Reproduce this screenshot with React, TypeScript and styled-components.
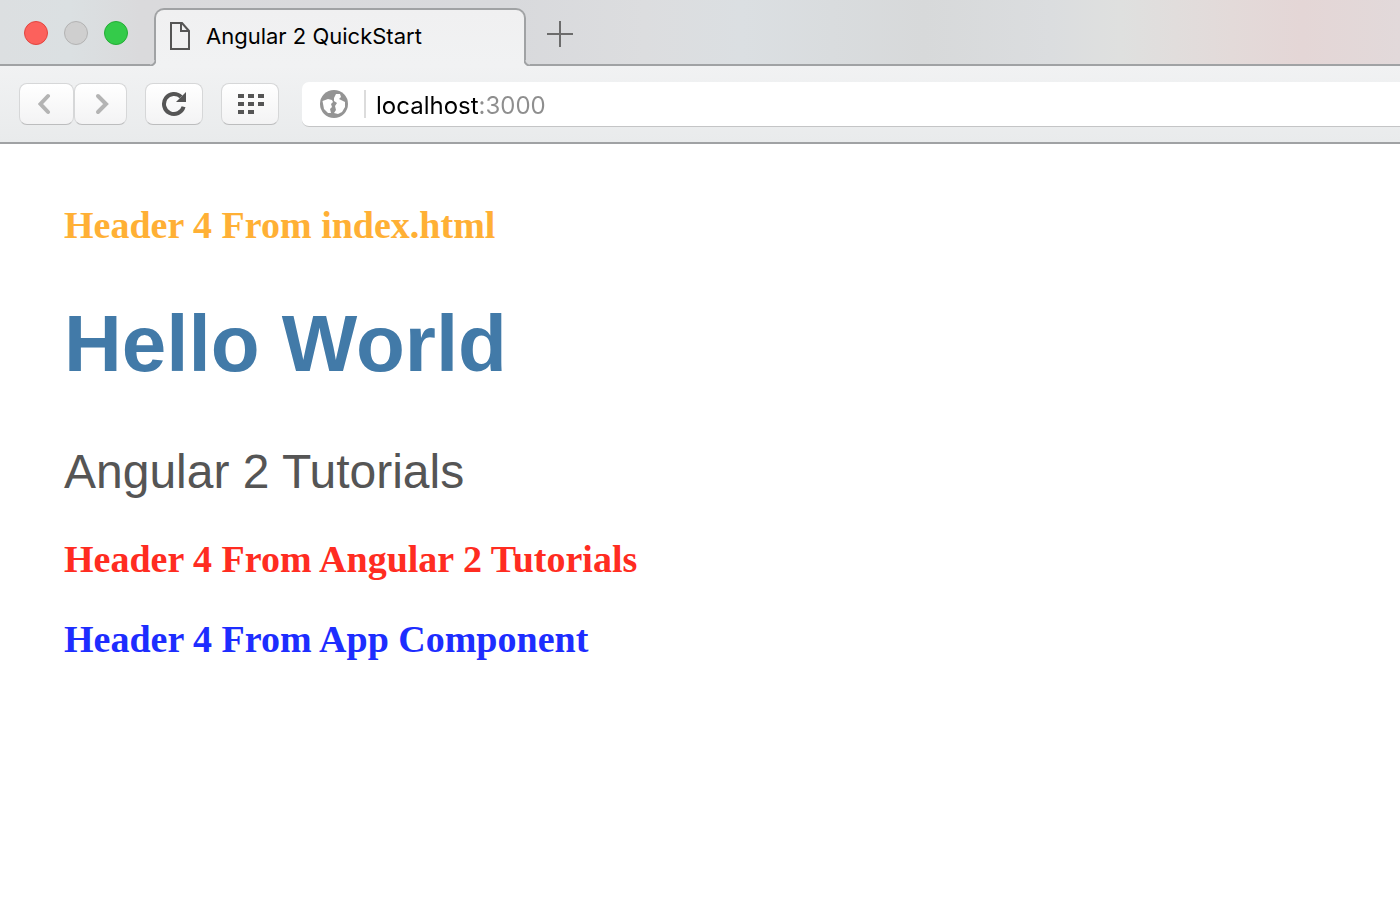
import React from "react";
import styled, { createGlobalStyle } from "styled-components";

const line = "#a0a2a4";
const bar = "#f1f2f3";

const GlobalStyle = createGlobalStyle`
  * { box-sizing: border-box; }
  body { margin: 0; background: #fff; }
  button { font: inherit; padding: 0; cursor: pointer; }
`;

const Window = styled.div`
  min-height: 100vh;
  overflow: hidden;
  background: #fff;
  font-family: Inter, "Liberation Sans", sans-serif;
`;

const TabStrip = styled.header`
  display: flex;
  height: 66px;
  border-bottom: 2px solid ${line};
  background: linear-gradient(90deg, #dcdfe1 0%, #dbe0e2 5%, #dadadc 10%, #d8d9dc 36%, #dcdddf 46%, #dbdfe2 53%, #d7d9da 66%, #dbdddf 75%, #dfe0df 80%, #e3dad9 88%, #e4d6d6 93%, #e2d9da 100%);
`;

const Lights = styled.div`
  display: flex;
  gap: 16px;
  width: 154px;
  padding: 21px 0 0 24px;
`;

const Light = styled.button<{ $fill: string; $edge: string }>`
  width: 24px;
  height: 24px;
  border: 1px solid ${(p) => p.$edge};
  border-radius: 50%;
  background: ${(p) => p.$fill};
`;

const Tab = styled.button`
  position: relative;
  display: flex;
  align-items: center;
  gap: 16px;
  width: 372px;
  height: 58px;
  margin-top: 8px;
  padding: 0 14px 4px;
  border: 2px solid ${line};
  border-bottom: 0;
  border-radius: 10px 10px 0 0;
  background: linear-gradient(#f0f0f1, ${bar});
  color: #000;
  font-size: 22px;
  line-height: 28px;
  white-space: nowrap;

  &::before,
  &::after {
    content: "";
    position: absolute;
    bottom: 0;
    width: 6px;
    height: 6px;
  }
  &::before {
    left: -6px;
    background: radial-gradient(circle at 0 0, #dadadc 4px, ${line} 5px, ${line} 6px, ${bar} 7px);
  }
  &::after {
    right: -6px;
    background: radial-gradient(circle at 100% 0, #d9dadc 4px, ${line} 5px, ${line} 6px, ${bar} 7px);
  }
`;

const NewTab = styled.button`
  display: flex;
  align-items: center;
  justify-content: center;
  width: 68px;
  height: 64px;
  padding-top: 4px;
  border: 0;
  background: transparent;
`;

const Toolbar = styled.nav`
  display: flex;
  align-items: flex-start;
  height: 78px;
  padding: 16px 0 0 19px;
  border-bottom: 2px solid ${line};
  background: linear-gradient(${bar}, #e9ebec);
`;

const Group = styled.div`
  display: flex;
  margin: 1px 18px 0 0;
`;

const ToolButton = styled.button<{ $width: number }>`
  display: flex;
  align-items: center;
  justify-content: center;
  width: ${(p) => p.$width}px;
  height: 42px;
  border: 1px solid #d6d7d8;
  border-bottom-color: #bcbdbe;
  border-radius: 8px;
  background: linear-gradient(#fff, #f3f3f4);
`;

const AddressBar = styled.label`
  display: flex;
  flex: 1;
  align-items: center;
  height: 45px;
  margin-left: 5px;
  padding-left: 17px;
  border-bottom: 1px solid #c4c5c6;
  border-radius: 7px 0 0 7px;
  background: #fff;
`;

const Divider = styled.span`
  width: 2px;
  height: 28px;
  margin: 0 10px 0 15px;
  background: #dcdcdc;
`;

const Address = styled.input`
  flex: 1;
  min-width: 0;
  padding: 4px 0 0;
  border: 0;
  outline: 0;
  background: linear-gradient(90deg, #000 103px, #8e8e8e 103px);
  background-clip: text;
  -webkit-background-clip: text;
  color: transparent;
  font: 24px/32px Inter, "Liberation Sans", sans-serif;
`;

const Page = styled.main`
  padding: 61px 64px;
  font-family: "Liberation Sans", Arial, sans-serif;
`;

const Title = styled.h1`
  margin: 51px 0 52px;
  color: #427aa8;
  font-size: 80px;
  line-height: 96px;
`;

const Subtitle = styled.p`
  margin: 0 0 39px;
  color: #555;
  font-size: 48px;
  line-height: 56px;
`;

const Heading = styled.h4<{ $color: string }>`
  margin: 0 0 40px;
  color: ${(p) => p.$color};
  font-family: Georgia, "Liberation Serif", serif;
  font-size: 38px;
  line-height: 40px;
`;

const PageIcon = () => (
  <svg width="20" height="28" viewBox="0 0 20 28" fill="none" stroke="#555" strokeWidth="2" aria-hidden="true">
    <path d="M1 1H12L19 9V27H1Z" />
    <path d="M11 1V9H19" />
  </svg>
);

const Chevron = ({ flip }: { flip?: boolean }) => (
  <svg width="18" height="22" viewBox="0 0 18 22" fill="none" stroke="#b4b4b4" strokeWidth="4" strokeLinecap="round" strokeLinejoin="miter" aria-hidden="true">
    <path d={flip ? "M6 3L14 11L6 19" : "M10 3L2.500 11L10 19"} />
  </svg>
);

const ReloadIcon = () => (
  <svg width="26" height="26" viewBox="0 0 26 26" aria-hidden="true">
    <path d="M20.07 5.93A10 10 0 1 0 22.6 15.8" fill="none" stroke="#555" strokeWidth="4" />
    <path d="M25 1V11H15Z" fill="#555" />
  </svg>
);

const GridIcon = () => (
  <svg width="28" height="20" viewBox="-2 0 28 20" fill="#555" aria-hidden="true">
    <path d="M0 0h6v4H0zM10 0h6v4h-6zM20 0h6v4h-6zM0 8h6v4H0zM10 8h6v4h-6zM20 8h6v4h-6zM0 16h6v4H0zM10 16h6v4h-6z" />
  </svg>
);

const GlobeIcon = () => (
  <svg width="30" height="30" viewBox="0 0 30 30" aria-hidden="true">
    <circle cx="15" cy="15" r="14" fill="#949494" />
    <path d="M3.500 12L9 10L13 11L14 13L12 15L13 18L11 20L12 24L9 24L5 20ZM15 9L17 5L21 5L22 8L20 10L22 11L26 13V18L23 23L19 25L15 24L17 21L16 17L18 14L15 12Z" fill="#fff" />
  </svg>
);

export default function App() {
  return (
    <Window>
      <GlobalStyle />
      <TabStrip>
        <Lights>
          <Light aria-label="Close" $fill="#fc615c" $edge="#e2453f" />
          <Light aria-label="Minimize" $fill="#cfcfcf" $edge="#b3b3b3" />
          <Light aria-label="Zoom" $fill="#34cb4a" $edge="#24ad36" />
        </Lights>
        <Tab>
          <PageIcon />
          Angular 2 QuickStart
        </Tab>
        <NewTab aria-label="New tab">
          <svg width="26" height="26" viewBox="0 0 26 26" stroke="#6c6c6c" strokeWidth="2" aria-hidden="true">
            <path d="M13 0V26M0 13H26" />
          </svg>
        </NewTab>
      </TabStrip>
      <Toolbar>
        <Group>
          <ToolButton $width={55} aria-label="Back"><Chevron /></ToolButton>
          <ToolButton $width={53} aria-label="Forward"><Chevron flip /></ToolButton>
        </Group>
        <Group>
          <ToolButton $width={58} aria-label="Reload"><ReloadIcon /></ToolButton>
        </Group>
        <Group>
          <ToolButton $width={58} aria-label="Speed dial"><GridIcon /></ToolButton>
        </Group>
        <AddressBar>
          <GlobeIcon />
          <Divider />
          <Address aria-label="Address" defaultValue="localhost:3000" spellCheck={false} />
        </AddressBar>
      </Toolbar>
      <Page>
        <Heading $color="#ffb035">Header 4 From index.html</Heading>
        <Title>Hello World</Title>
        <Subtitle>Angular 2 Tutorials</Subtitle>
        <Heading $color="#ff2c21">Header 4 From Angular 2 Tutorials</Heading>
        <Heading $color="#1d2dff">Header 4 From App Component</Heading>
      </Page>
    </Window>
  );
}
